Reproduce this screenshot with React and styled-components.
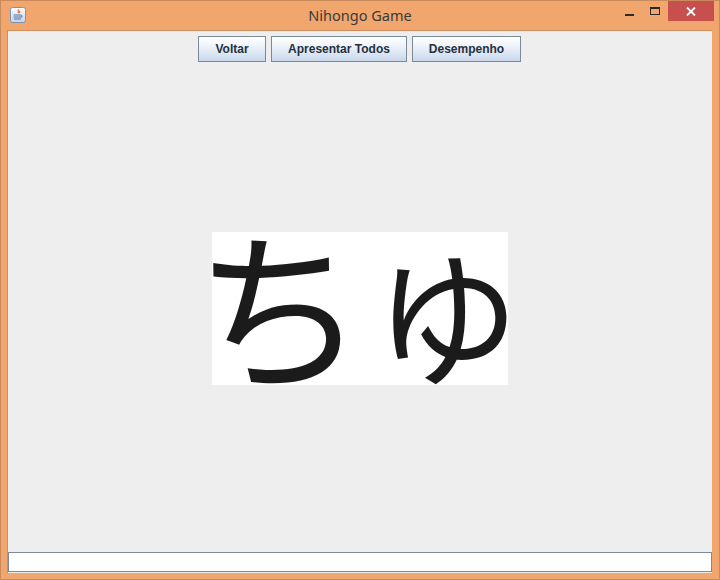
import styled, { createGlobalStyle } from "styled-components"

const Global = createGlobalStyle`
  html, body { margin: 0; padding: 0; background: #f0a66c; }
  * { box-sizing: border-box; }
`

const Frame = styled.div`
  width: 720px;
  height: 580px;
  background: #f0a66c;
  border: 1px solid #c98a5c;
  display: flex;
  flex-direction: column;
  overflow: hidden;
`

const TitleBar = styled.div`
  height: 29px;
  display: grid;
  grid-template-columns: 1fr auto 1fr;
  align-items: start;
`

const IconSlot = styled.div`
  padding: 6px 0 0 9px;
  display: flex;
`

const Title = styled.div`
  font-family: "Noto Sans", "Open Sans", sans-serif;
  font-size: 14.5px;
  color: #3a3a3a;
  line-height: 28px;
`

const Controls = styled.div`
  display: flex;
  justify-content: flex-end;
  align-items: flex-start;
  padding-right: 5px;
`

const CtrlButton = styled.div`
  width: ${p => p.$w}px;
  height: 20px;
  display: flex;
  align-items: center;
  justify-content: center;
  background: ${p => p.$bg || "transparent"};
`

const Minimize = styled.div`
  width: 9px;
  height: 2px;
  margin-top: 7px;
  background: #2b2b2b;
`

const Maximize = styled.div`
  width: 10px;
  height: 8px;
  margin-bottom: 1px;
  border: 1px solid #2b2b2b;
  border-top-width: 2px;
`

const Client = styled.div`
  flex: 1;
  margin: 0 7px 6px 6px;
  border-top: 1px solid #d08c5c;
  border-left: 1px solid #d08c5c;
  background: #eeeeee;
  display: flex;
  flex-direction: column;
`

const Toolbar = styled.div`
  display: flex;
  justify-content: center;
  gap: 5px;
  padding: 5px 1px 0 0;
`

const Button = styled.button`
  width: ${p => p.$w}px;
  height: 26px;
  padding: 0;
  border: 1px solid #7a8a99;
  border-radius: 0;
  background: linear-gradient(to bottom, #ffffff 0%, #f2f6fb 30%, #c9d9ec 100%);
  font-family: "Liberation Sans", Arial, sans-serif;
  font-weight: bold;
  font-size: 12px;
  color: #263040;
`

const Stage = styled.div`
  flex: 1;
  display: flex;
  align-items: center;
  justify-content: center;
  padding-top: 3px;
`

const KanaCard = styled.div`
  width: 296px;
  height: 153px;
  background: #ffffff;
  display: flex;
  align-items: flex-end;
  justify-content: space-between;
`

const Kana = styled.span`
  font-family: "Noto Sans CJK JP", sans-serif;
  font-size: ${p => p.$size}px;
  line-height: 1;
  color: #1b1b1b;
  margin: ${p => p.$m};
`

const Input = styled.input`
  width: 100%;
  height: 20px;
  margin-bottom: 1px;
  border: 1px solid #7a8a99;
  background: #ffffff;
  outline: none;
`

function JavaIcon() {
  return (
    <svg width="16" height="16" viewBox="0 0 16 16">
      <defs>
        <linearGradient id="jbg" x1="0" y1="0" x2="0" y2="1">
          <stop offset="0" stopColor="#fdfdff" />
          <stop offset="1" stopColor="#c4d3e6" />
        </linearGradient>
      </defs>
      <rect x="0.5" y="0.5" width="15" height="15" rx="2" fill="url(#jbg)" stroke="#7d93b0" />
      <path d="M8.5 2.5c-1.5 1.2 1 1.8-0.4 3.6M9.8 3.8c-1 0.8 0.6 1.2-0.3 2.3" stroke="#e0662a" strokeWidth="1.1" fill="none" />
      <path d="M3.5 8h7.5M3.5 10h8M4 12h7" stroke="#4f76a8" strokeWidth="1.2" />
      <path d="M11 8.2c1.6 0 1.6 1.8 0 1.8" stroke="#4f76a8" strokeWidth="1" fill="none" />
    </svg>
  )
}

function CloseIcon() {
  return (
    <svg width="10" height="9" viewBox="0 0 10 9">
      <path d="M1 0.5l8 8M9 0.5l-8 8" stroke="#ffffff" strokeWidth="1.8" />
    </svg>
  )
}

export default function App() {
  return (
    <>
      <Global />
      <Frame>
        <TitleBar>
          <IconSlot>
            <JavaIcon />
          </IconSlot>
          <Title>Nihongo Game</Title>
          <Controls>
            <CtrlButton $w={26}><Minimize /></CtrlButton>
            <CtrlButton $w={26}><Maximize /></CtrlButton>
            <CtrlButton $w={46} $bg="#c7504f"><CloseIcon /></CtrlButton>
          </Controls>
        </TitleBar>
        <Client>
          <Toolbar>
            <Button $w={68}>Voltar</Button>
            <Button $w={136}>Apresentar Todos</Button>
            <Button $w={109}>Desempenho</Button>
          </Toolbar>
          <Stage>
            <KanaCard>
              <Kana $size={172} $m="0 0 -2px -18px">ち</Kana>
              <Kana $size={146} $m="0 -12px 1px 0">ゆ</Kana>
            </KanaCard>
          </Stage>
          <Input />
        </Client>
      </Frame>
    </>
  )
}
